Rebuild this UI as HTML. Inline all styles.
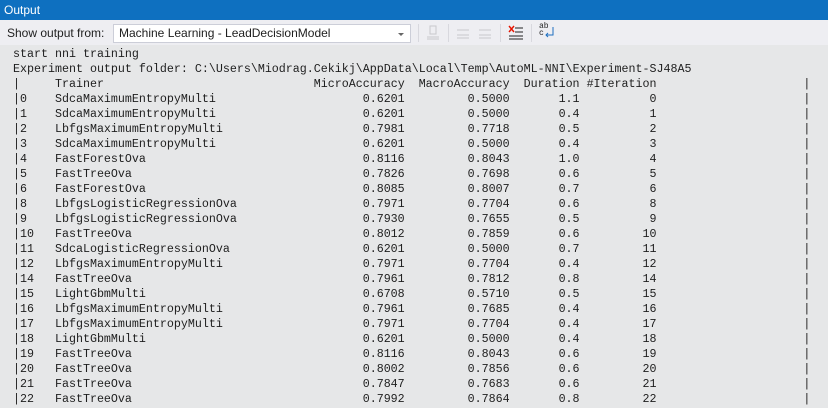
<!DOCTYPE html>
<html><head><meta charset="utf-8"><style>
body{margin:0;width:828px;height:408px;overflow:hidden;background:#e6e7e8;font-family:"Liberation Sans",sans-serif;position:relative}
#title{position:absolute;left:0;top:0;width:828px;height:20px;background:#0e70c0;color:#fff;font-size:12px;line-height:20px;padding-left:4px;box-sizing:border-box}
#tb{position:absolute;left:0;top:20px;width:828px;height:25px;background:#eeeef2}
#lbl{position:absolute;left:7px;top:6px;font-size:12px;color:#1e1e1e}
#dd{position:absolute;left:113px;top:4px;width:298px;height:19px;background:#fff;border:1px solid #ccced8;box-sizing:border-box;font-size:12px;line-height:17px;padding-left:5px;color:#1e1e1e}
#dd:after{content:"";position:absolute;right:6px;top:8px;border-left:3px solid transparent;border-right:3px solid transparent;border-top:3px solid #666}
.sep{position:absolute;top:4px;width:1px;height:18px;background:#d8d8de}
#out{position:absolute;left:13px;top:47px;font-family:"Liberation Mono",monospace;font-size:11.67px;line-height:15px;color:#1e1e1e}
.l{position:relative;height:15px;white-space:pre}
.l span{position:absolute;top:0}
.t{left:6ch}.m{left:43ch;width:13ch;text-align:right}.a{left:56ch;width:15ch;text-align:right}.d{left:71ch;width:10ch;text-align:right}.i{left:81ch;width:11ch;text-align:right}.b{left:113ch}
</style></head><body>
<div id="title">Output</div>
<div id="tb">
<div id="lbl">Show output from:</div>
<div id="dd">Machine Learning - LeadDecisionModel</div>
<div class="sep" style="left:418px"></div>
<svg style="position:absolute;left:425px;top:4px" width="16" height="18"><g stroke="#c8c8cc" fill="none"><rect x="5" y="2" width="6" height="8"/><line x1="2" y1="13" x2="14" y2="13"/><line x1="2" y1="15" x2="14" y2="15"/></g></svg>
<div class="sep" style="left:448px"></div>
<svg style="position:absolute;left:455px;top:4px" width="40" height="18"><g stroke="#c8c8cc" fill="none"><line x1="2" y1="6" x2="14" y2="6"/><line x1="2" y1="11" x2="14" y2="11"/><line x1="2" y1="14" x2="14" y2="14"/><line x1="24" y1="6" x2="36" y2="6"/><line x1="24" y1="11" x2="36" y2="11"/><line x1="24" y1="14" x2="36" y2="14"/></g></svg>
<div class="sep" style="left:500px"></div>
<svg style="position:absolute;left:508px;top:4px" width="16" height="18"><g stroke="#222"><line x1="7" y1="4" x2="15" y2="4"/><line x1="7" y1="8" x2="15" y2="8"/><line x1="1" y1="12" x2="15" y2="12"/><line x1="1" y1="15" x2="15" y2="15"/></g><g stroke="#e51400" stroke-width="1.4"><line x1="1" y1="2" x2="6" y2="8"/><line x1="6" y1="2" x2="1" y2="8"/></g></svg>
<div class="sep" style="left:531px"></div>
<div style="position:absolute;left:539px;top:3px;font-family:'Liberation Mono',monospace;font-size:8px;line-height:7px;color:#222">ab<br>c</div>
<svg style="position:absolute;left:543px;top:6px" width="12" height="14"><path d="M10 1V9H3M5 7L3 9L5 11" stroke="#1e6fc0" fill="none"/></svg>
</div>
<div id="out"><div class="l">start nni training</div><div class="l">Experiment output folder: C:\Users\Miodrag.Cekikj\AppData\Local\Temp\AutoML-NNI\Experiment-SJ48A5</div><div class="l"><span>|</span><span class="t">Trainer</span><span class="m">MicroAccuracy</span><span class="a">MacroAccuracy</span><span class="d">Duration</span><span class="i">#Iteration</span><span class="b">|</span></div><div class="l"><span>|0</span><span class="t">SdcaMaximumEntropyMulti</span><span class="m">0.6201</span><span class="a">0.5000</span><span class="d">1.1</span><span class="i">0</span><span class="b">|</span></div><div class="l"><span>|1</span><span class="t">SdcaMaximumEntropyMulti</span><span class="m">0.6201</span><span class="a">0.5000</span><span class="d">0.4</span><span class="i">1</span><span class="b">|</span></div><div class="l"><span>|2</span><span class="t">LbfgsMaximumEntropyMulti</span><span class="m">0.7981</span><span class="a">0.7718</span><span class="d">0.5</span><span class="i">2</span><span class="b">|</span></div><div class="l"><span>|3</span><span class="t">SdcaMaximumEntropyMulti</span><span class="m">0.6201</span><span class="a">0.5000</span><span class="d">0.4</span><span class="i">3</span><span class="b">|</span></div><div class="l"><span>|4</span><span class="t">FastForestOva</span><span class="m">0.8116</span><span class="a">0.8043</span><span class="d">1.0</span><span class="i">4</span><span class="b">|</span></div><div class="l"><span>|5</span><span class="t">FastTreeOva</span><span class="m">0.7826</span><span class="a">0.7698</span><span class="d">0.6</span><span class="i">5</span><span class="b">|</span></div><div class="l"><span>|6</span><span class="t">FastForestOva</span><span class="m">0.8085</span><span class="a">0.8007</span><span class="d">0.7</span><span class="i">6</span><span class="b">|</span></div><div class="l"><span>|8</span><span class="t">LbfgsLogisticRegressionOva</span><span class="m">0.7971</span><span class="a">0.7704</span><span class="d">0.6</span><span class="i">8</span><span class="b">|</span></div><div class="l"><span>|9</span><span class="t">LbfgsLogisticRegressionOva</span><span class="m">0.7930</span><span class="a">0.7655</span><span class="d">0.5</span><span class="i">9</span><span class="b">|</span></div><div class="l"><span>|10</span><span class="t">FastTreeOva</span><span class="m">0.8012</span><span class="a">0.7859</span><span class="d">0.6</span><span class="i">10</span><span class="b">|</span></div><div class="l"><span>|11</span><span class="t">SdcaLogisticRegressionOva</span><span class="m">0.6201</span><span class="a">0.5000</span><span class="d">0.7</span><span class="i">11</span><span class="b">|</span></div><div class="l"><span>|12</span><span class="t">LbfgsMaximumEntropyMulti</span><span class="m">0.7971</span><span class="a">0.7704</span><span class="d">0.4</span><span class="i">12</span><span class="b">|</span></div><div class="l"><span>|14</span><span class="t">FastTreeOva</span><span class="m">0.7961</span><span class="a">0.7812</span><span class="d">0.8</span><span class="i">14</span><span class="b">|</span></div><div class="l"><span>|15</span><span class="t">LightGbmMulti</span><span class="m">0.6708</span><span class="a">0.5710</span><span class="d">0.5</span><span class="i">15</span><span class="b">|</span></div><div class="l"><span>|16</span><span class="t">LbfgsMaximumEntropyMulti</span><span class="m">0.7961</span><span class="a">0.7685</span><span class="d">0.4</span><span class="i">16</span><span class="b">|</span></div><div class="l"><span>|17</span><span class="t">LbfgsMaximumEntropyMulti</span><span class="m">0.7971</span><span class="a">0.7704</span><span class="d">0.4</span><span class="i">17</span><span class="b">|</span></div><div class="l"><span>|18</span><span class="t">LightGbmMulti</span><span class="m">0.6201</span><span class="a">0.5000</span><span class="d">0.4</span><span class="i">18</span><span class="b">|</span></div><div class="l"><span>|19</span><span class="t">FastTreeOva</span><span class="m">0.8116</span><span class="a">0.8043</span><span class="d">0.6</span><span class="i">19</span><span class="b">|</span></div><div class="l"><span>|20</span><span class="t">FastTreeOva</span><span class="m">0.8002</span><span class="a">0.7856</span><span class="d">0.6</span><span class="i">20</span><span class="b">|</span></div><div class="l"><span>|21</span><span class="t">FastTreeOva</span><span class="m">0.7847</span><span class="a">0.7683</span><span class="d">0.6</span><span class="i">21</span><span class="b">|</span></div><div class="l"><span>|22</span><span class="t">FastTreeOva</span><span class="m">0.7992</span><span class="a">0.7864</span><span class="d">0.8</span><span class="i">22</span><span class="b">|</span></div></div>
</body></html>
